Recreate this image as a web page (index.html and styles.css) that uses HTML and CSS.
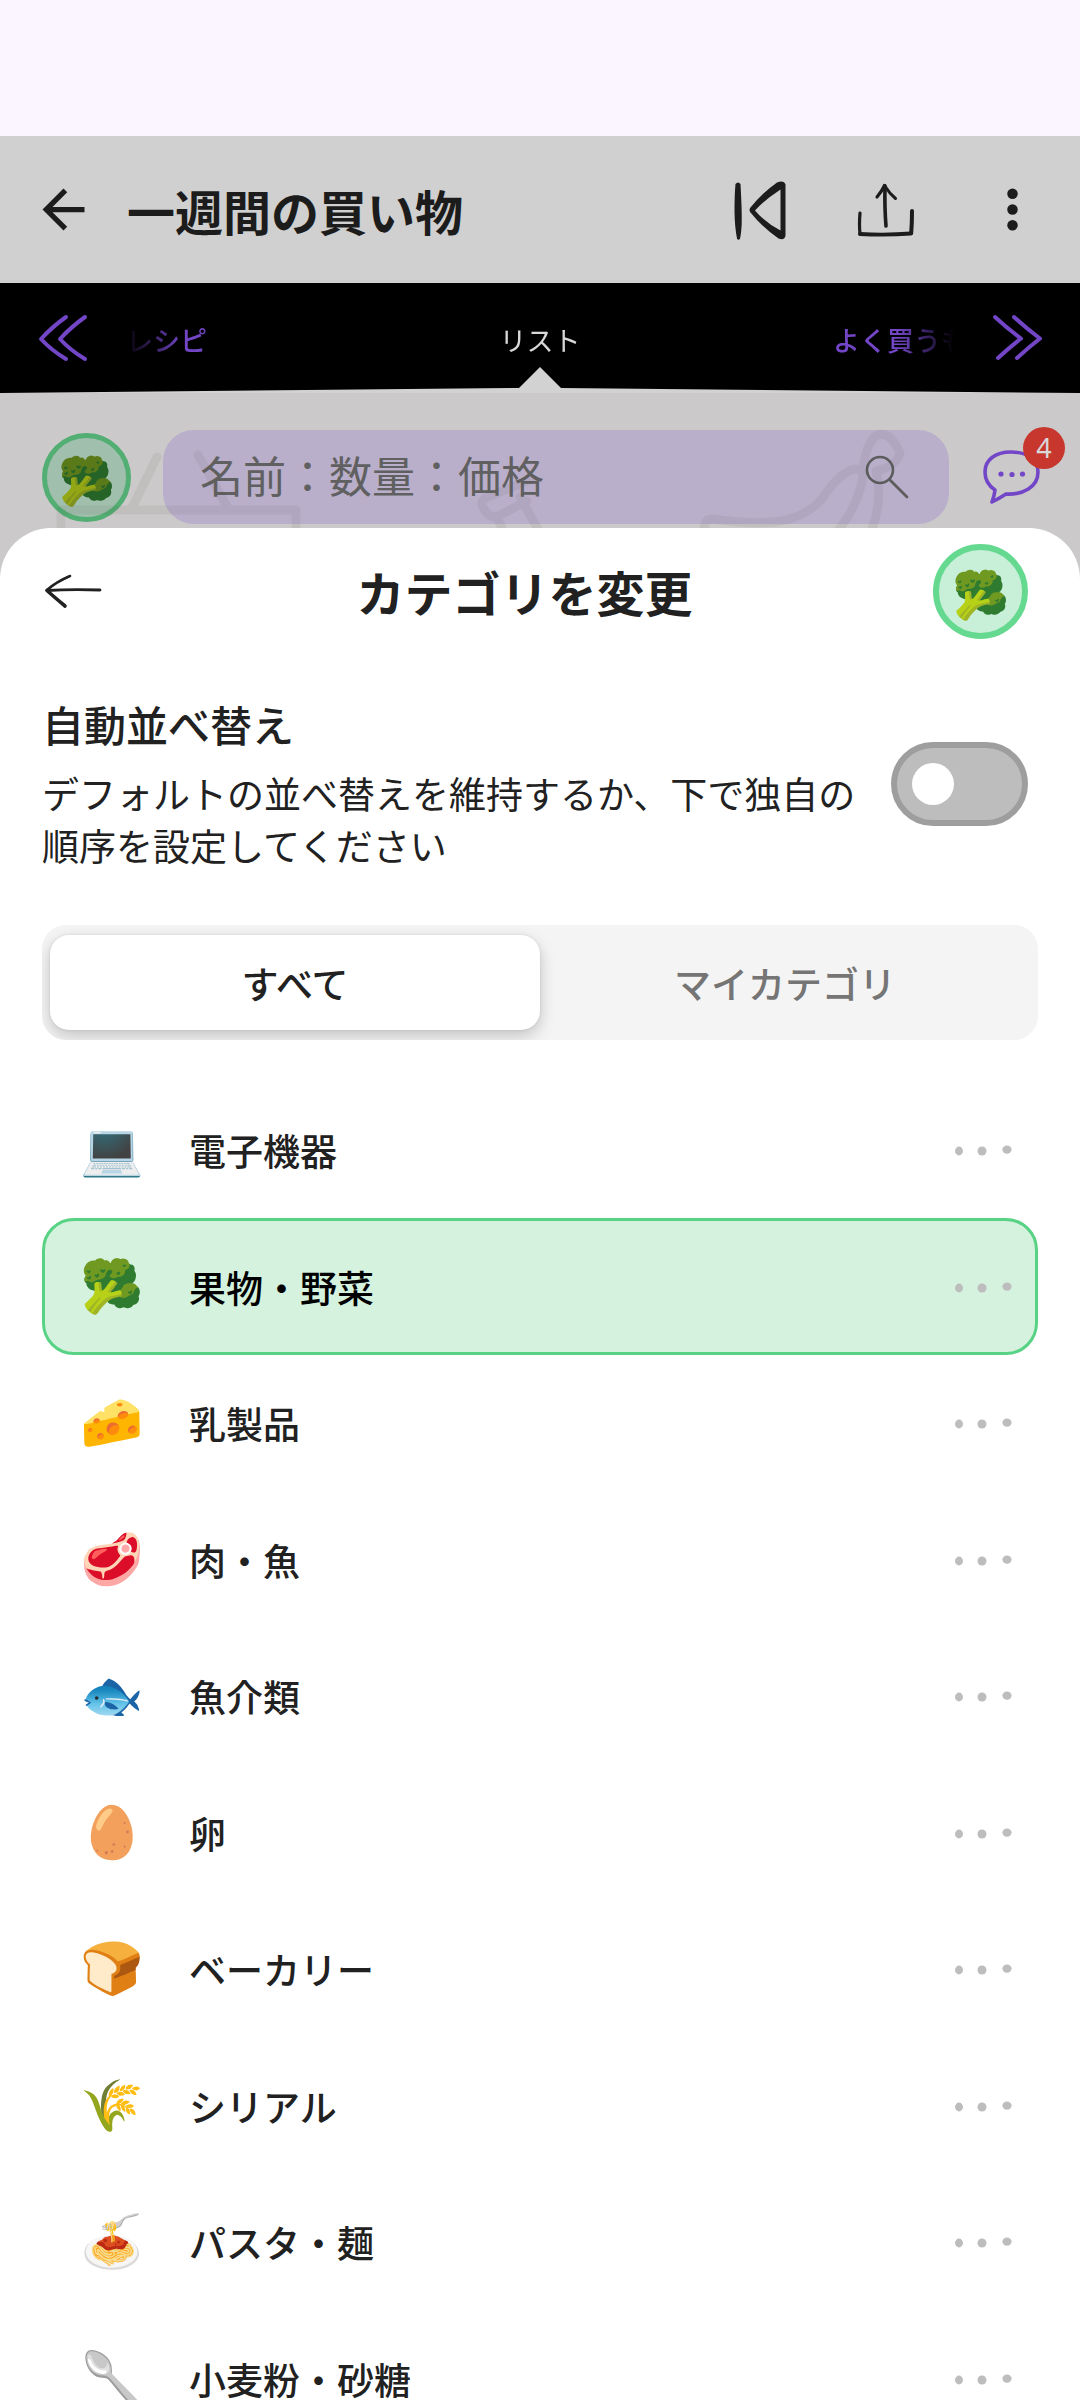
FILE: index.html
```
<!DOCTYPE html>
<html lang="ja">
  <head>
    <meta charset="utf-8">
    <meta name="viewport" content="width=device-width, initial-scale=1">
    <title>一週間の買い物</title>
    <link rel="stylesheet" href="styles.css">
  </head>
  <body>
    <svg class="sprite" aria-hidden="true">
      <symbol id="more" viewBox="0 0 60 20">
        <ellipse cx="6" cy="11" rx="4" ry="4.4"/>
        <ellipse cx="29" cy="11" rx="4.5" ry="4.6"/>
        <ellipse cx="54" cy="9.6" rx="4.6" ry="4.2"/>
      </symbol>
    </svg>

    <div class="app">
      <header class="topbar">
        <button class="icon-btn" aria-label="戻る">
          <svg width="63" height="63" viewBox="0 0 24 24" fill="#1c1c1c"><path d="M20 11H7.83l5.59-5.59L12 4l-8 8 8 8 1.41-1.41L7.83 13H20z"/></svg>
        </button>
        <h1>一週間の買い物</h1>
        <div class="actions">
          <button class="icon-btn" aria-label="前へ">
            <svg width="60" height="64" viewBox="0 0 60 64" fill="#1c1c1c">
              <path d="M4.500 6q2.500-3 5 0q1.500 26 1.200 40q-.5 10-1.800 15q-1.200 1.600-2.800 0q-2.400-12-2.600-27q0-18 1-28z"/>
              <path fill-rule="evenodd" d="M46 4.500q7-2.500 8.500 2v51q-1 5.500-7 3q-16-11-28-26q-2-2.500 0-5q11-14 26.500-25zM49.500 11.500q-16 10.500-25.500 21q10 12 25.500 20z"/>
            </svg>
          </button>
          <button class="icon-btn" aria-label="共有">
            <svg width="60" height="64" viewBox="0 0 60 64" fill="none" stroke="#1c1c1c" stroke-linecap="round" stroke-linejoin="round">
              <path d="M4 35q-1 12 0 21" stroke-width="3.200"/>
              <path d="M4 56q26 1.500 51-.5" stroke-width="3.800"/>
              <path d="M56 33q0 12-.8 22" stroke-width="4"/>
              <path d="M29 8q-.5 22 1 40" stroke-width="3.600"/>
              <path d="M21 19q5-6 7.500-11.500" stroke-width="3.200"/>
              <path d="M28.500 7.500q5 8 11 13" stroke-width="3"/>
            </svg>
          </button>
          <button class="icon-btn" aria-label="メニュー">
            <svg width="63" height="63" viewBox="0 0 24 24" fill="#1c1c1c"><circle cx="12" cy="6" r="2"/><circle cx="12" cy="12" r="2"/><circle cx="12" cy="18" r="2"/></svg>
          </button>
        </div>
      </header>

      <nav class="tabs">
        <button class="icon-btn" aria-label="前のタブ">
          <svg width="54" height="50" viewBox="0 0 54 50" fill="none" stroke="#7346c8" stroke-linecap="round" stroke-linejoin="round">
            <path d="M30 4Q16 14 5 26Q15 37 30 46" stroke-width="4"/>
            <path d="M49 4Q35 14 24 26Q34 37 49 46" stroke-width="4"/>
          </svg>
        </button>
        <div class="tab-strip">
          <a href="#recipes">レシピ</a>
          <a href="#list" class="current">リスト</a>
          <a href="#favorites">よく買うもの</a>
        </div>
        <button class="icon-btn" aria-label="次のタブ">
          <svg width="54" height="50" viewBox="0 0 54 50" fill="none" stroke="#7346c8" stroke-linecap="round" stroke-linejoin="round">
            <path d="M5 4Q18 16 31 25.500Q20 34 8 45" stroke-width="4"/>
            <path d="M24 4Q37 16 50 25.500Q39 34 27 45" stroke-width="4"/>
          </svg>
        </button>
        <svg class="notch" viewBox="0 0 1080 26" preserveAspectRatio="none" aria-hidden="true"><path d="M0 26L519 21L540 0L561 21L1080 26z" fill="#d2d2d2"/></svg>
      </nav>

      <section class="search-row">
        <button class="avatar avatar-dim" aria-label="果物・野菜">🥦</button>
        <div class="search">
          <input type="text" placeholder="名前：数量：価格" aria-label="名前：数量：価格">
          <svg width="46" height="46" viewBox="0 0 46 46" fill="none" stroke="#5c5c5c" stroke-linecap="round">
            <circle cx="16" cy="16" r="13" stroke-width="2.600"/>
            <path d="M26 26L43 43" stroke-width="2.800"/>
          </svg>
        </div>
        <button class="icon-btn chat" aria-label="メッセージ">
          <svg width="60" height="56" viewBox="0 0 60 56">
            <path d="M30 3C14 3 4 11 4 23C4 31 8 37 14 41C13.500 46 12 50 11 53C17 50 22 47 25 45C42 46 57 38 57 23C57 10 46 3 30 3z" fill="none" stroke="#7346c8" stroke-width="3.600" stroke-linejoin="round"/>
            <g fill="#7346c8"><circle cx="20" cy="25" r="2.600"/><circle cx="31" cy="25.500" r="2.600"/><circle cx="41.500" cy="25" r="2.600"/></g>
          </svg>
          <span class="badge">4</span>
        </button>
        <svg class="doodles" viewBox="0 0 1080 135" preserveAspectRatio="xMidYMin slice" aria-hidden="true">
          <g fill="none" stroke="#5a4a46" stroke-width="9" stroke-linecap="round" stroke-linejoin="round">
            <path d="M157 64L131 117M198 62L229 117M61 150V117H296V150"/>
            <path d="M484 116Q478 108 488 104L532 86M484 116Q490 127 500 122L527 108M520 104L540 140M497 124L504 140"/>
            <path d="M706 150Q700 126 712 126C770 134 800 130 822 106Q840 78 856 76M830 145Q852 126 862 90Q864 48 878 42Q890 38 900 60Q896 74 876 78Q884 112 868 145"/>
          </g>
        </svg>
      </section>

      <main class="sheet">
        <header class="sheet-header">
          <button class="icon-btn back" aria-label="閉じる">
            <svg width="60" height="40" viewBox="0 0 60 40" fill="none" stroke="#212121" stroke-linecap="round" stroke-linejoin="round">
              <path d="M5 19.500Q29 18 58 19" stroke-width="2.800"/>
              <path d="M28 5Q14 11 5 19" stroke-width="2.600"/>
              <path d="M5 19.500Q11 25 23 35" stroke-width="3.600"/>
            </svg>
          </button>
          <h2>カテゴリを変更</h2>
          <button class="avatar" aria-label="果物・野菜">🥦</button>
        </header>

        <div class="auto-sort">
          <label for="auto-sort">
            <strong>自動並べ替え</strong>
            <span>デフォルトの並べ替えを維持するか、下で独自の順序を設定してください</span>
          </label>
          <input type="checkbox" class="switch" id="auto-sort">
        </div>

        <div class="segmented">
          <button class="active">すべて</button>
          <button>マイカテゴリ</button>
        </div>

        <ul class="categories">
          <li>
            <button class="category"><span class="emoji">💻</span>電子機器</button>
            <button class="more" aria-label="その他"><svg><use href="#more"/></svg></button>
          </li>
          <li class="selected">
            <button class="category"><span class="emoji">🥦</span>果物・野菜</button>
            <button class="more" aria-label="その他"><svg><use href="#more"/></svg></button>
          </li>
          <li>
            <button class="category"><span class="emoji">🧀</span>乳製品</button>
            <button class="more" aria-label="その他"><svg><use href="#more"/></svg></button>
          </li>
          <li>
            <button class="category"><span class="emoji">🥩</span>肉・魚</button>
            <button class="more" aria-label="その他"><svg><use href="#more"/></svg></button>
          </li>
          <li>
            <button class="category"><span class="emoji">🐟</span>魚介類</button>
            <button class="more" aria-label="その他"><svg><use href="#more"/></svg></button>
          </li>
          <li>
            <button class="category"><span class="emoji">🥚</span>卵</button>
            <button class="more" aria-label="その他"><svg><use href="#more"/></svg></button>
          </li>
          <li>
            <button class="category"><span class="emoji">🍞</span>ベーカリー</button>
            <button class="more" aria-label="その他"><svg><use href="#more"/></svg></button>
          </li>
          <li>
            <button class="category"><span class="emoji">🌾</span>シリアル</button>
            <button class="more" aria-label="その他"><svg><use href="#more"/></svg></button>
          </li>
          <li>
            <button class="category"><span class="emoji">🍝</span>パスタ・麺</button>
            <button class="more" aria-label="その他"><svg><use href="#more"/></svg></button>
          </li>
          <li>
            <button class="category"><span class="emoji">🥄</span>小麦粉・砂糖</button>
            <button class="more" aria-label="その他"><svg><use href="#more"/></svg></button>
          </li>
        </ul>
      </main>
    </div>
  </body>
</html>
```
FILE: styles.css
```
* {
  box-sizing: border-box;
}
body {
  margin: 0;
  background-color: #cbc9c9;
  color: #212121;
  font-family: "Noto Sans CJK JP", sans-serif;
}
h1,
h2 {
  margin: 0;
  font-size: 48px;
  line-height: 64px;
  font-weight: 700;
}
button {
  margin: 0;
  padding: 0;
  border: none;
  background: none;
  color: inherit;
  font: inherit;
  cursor: pointer;
}
svg {
  display: block;
}
.sprite {
  position: absolute;
  width: 0;
  height: 0;
}
.app {
  display: flex;
  flex-direction: column;
  height: 100vh;
  overflow: hidden;
  border-top: 136px solid #faf5ff;
}
.icon-btn {
  flex: none;
}

/* top bar */
.topbar {
  flex: none;
  display: flex;
  align-items: center;
  gap: 32px;
  height: 147px;
  padding: 0 36px 0 32px;
  background-color: #d0d0d0;
  color: #1c1c1c;
}
.topbar h1 {
  flex: 1;
}
.actions {
  display: flex;
  align-items: center;
  gap: 65px;
}

/* tabs */
.tabs {
  position: relative;
  flex: none;
  display: flex;
  align-items: center;
  gap: 36px;
  height: 110px;
  padding: 0 36px;
  background-color: #000;
}
.tab-strip {
  flex: 1;
  min-width: 0;
  display: grid;
  grid-template-columns: 1fr auto 1fr;
  padding-top: 4px;
  overflow: hidden;
  font-size: 27px;
  line-height: 40px;
  white-space: nowrap;
  -webkit-mask-image: linear-gradient(to right, transparent, #000 56px, #000 calc(100% - 56px), transparent);
  mask-image: linear-gradient(to right, transparent, #000 56px, #000 calc(100% - 56px), transparent);
}
.tab-strip a {
  color: #7346c8;
  font-weight: 500;
  text-decoration: none;
}
.tab-strip .current {
  color: #d8d8d8;
  font-weight: 400;
}
.tab-strip a:last-child {
  justify-self: end;
  margin-right: -41px;
}
.notch {
  position: absolute;
  left: 0;
  bottom: 0;
  width: 100%;
  height: 26px;
}

/* search row */
.search-row {
  position: relative;
  flex: none;
  display: flex;
  align-items: center;
  gap: 32px;
  height: 135px;
  padding: 37px 39px 4px 42px;
}
.avatar {
  flex: none;
  width: 95px;
  height: 95px;
  border: 6px solid #66d990;
  border-radius: 50%;
  background-color: #c8efd7;
  font-size: 46px;
  line-height: 74px;
  text-align: center;
}
.avatar-dim {
  width: 89px;
  height: 89px;
  border: 5px solid #66d990;
  filter: brightness(0.8);
}
.search {
  flex: 1;
  min-width: 0;
  display: flex;
  align-items: center;
  height: 94px;
  padding: 0 39px 0 37px;
  border-radius: 31px;
  background-color: #b9afcb;
}
.search input {
  flex: 1;
  min-width: 0;
  padding: 0 0 6px;
  border: none;
  outline: none;
  background: none;
  color: #606060;
  font-family: inherit;
  font-size: 43px;
}
.search input::placeholder {
  color: #606060;
}
.chat {
  position: relative;
}
.badge {
  position: absolute;
  top: -22px;
  right: -24px;
  width: 42px;
  height: 42px;
  border-radius: 50%;
  background-color: #c8372d;
  color: #d8d8d8;
  font-family: "Noto Sans", sans-serif;
  font-size: 27px;
  line-height: 42px;
  text-align: center;
}
.doodles {
  position: absolute;
  top: 0;
  left: 0;
  width: 100%;
  height: 100%;
  opacity: 0.08;
  pointer-events: none;
}

/* bottom sheet */
.sheet {
  flex: 1;
  min-height: 0;
  display: flex;
  flex-direction: column;
  padding: 0 42px;
  border-radius: 51px 51px 0 0;
  background-color: #fff;
}
.sheet-header {
  flex: none;
  display: flex;
  align-items: center;
  justify-content: space-between;
  height: 126px;
  padding-right: 10px;
}
.back {
  padding-right: 14px;
}
.auto-sort {
  flex: none;
  display: flex;
  align-items: center;
  gap: 29px;
  margin-top: 40px;
  padding-right: 10px;
}
.auto-sort label {
  flex: 1;
}
.auto-sort strong,
.auto-sort span {
  display: block;
}
.auto-sort strong {
  margin-bottom: 13px;
  font-size: 42px;
  line-height: 60px;
  font-weight: 500;
}
.auto-sort span {
  font-size: 37px;
  line-height: 52px;
}
.switch {
  -webkit-appearance: none;
  appearance: none;
  flex: none;
  display: flex;
  align-items: center;
  width: 137px;
  height: 84px;
  margin: 2px 0 0;
  padding-left: 15px;
  border: 6px solid #9e9e9e;
  border-radius: 42px;
  background-color: #bdbdbd;
}
.switch::before {
  content: "";
  width: 42px;
  height: 42px;
  border-radius: 50%;
  background-color: #fff;
}
.switch:checked {
  justify-content: flex-end;
  padding: 0 15px 0 0;
  border-color: #4fbf78;
  background-color: #66d990;
}

.segmented {
  flex: none;
  display: grid;
  grid-template-columns: 1fr 1fr;
  margin-top: 54px;
  padding: 10px 8px;
  border-radius: 24px;
  background-color: #f4f4f4;
  overflow: hidden;
}
.segmented button {
  height: 95px;
  border-radius: 19px;
  color: #757575;
  font-size: 37px;
  font-weight: 500;
}
.segmented .active {
  background-color: #fff;
  box-shadow: 0 6px 16px rgba(0, 0, 0, 0.2), 0 0 3px rgba(0, 0, 0, 0.1);
  color: #212121;
}

.categories {
  flex: 1;
  min-height: 0;
  display: grid;
  grid-auto-rows: 136px 137px;
  margin: 42px 0 0;
  padding: 0;
  list-style: none;
  overflow-y: auto;
  scrollbar-width: none;
}
.categories li {
  display: flex;
  border: 3px solid transparent;
  border-radius: 32px;
}
.categories .selected {
  border-color: #58d284;
  background-color: #d4f2de;
  color: #000;
}
.category {
  flex: 1;
  display: flex;
  align-items: center;
  gap: 45px;
  padding-left: 34px;
  font-size: 37px;
  font-weight: 500;
}
.emoji {
  width: 65px;
  height: 64px;
  font-size: 51px;
  line-height: 54px;
}
.more {
  padding: 0 22px;
}
.more svg {
  width: 60px;
  height: 20px;
  fill: #bdbdbd;
}
```
